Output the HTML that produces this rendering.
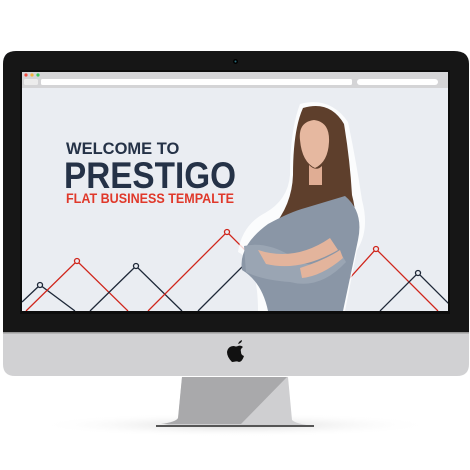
<!DOCTYPE html>
<html><head><style>
html,body{margin:0;padding:0;background:#fff;width:470px;height:470px;overflow:hidden}
svg{display:block}
text{font-family:"Liberation Sans",sans-serif;font-weight:bold}
</style></head><body>
<svg width="470" height="470" viewBox="0 0 470 470">
<defs>
<radialGradient id="sh" cx="0.5" cy="0.5" r="0.5"><stop offset="0" stop-color="#d8d8d8"/><stop offset="1" stop-color="#fff" stop-opacity="0"/></radialGradient>
<clipPath id="scr"><rect x="22" y="88" width="426" height="223"/></clipPath>
</defs>
<ellipse cx="235" cy="425" rx="200" ry="12" fill="url(#sh)"/>
<path d="M182 377 L288 377 L292 420 Q296 424 314 426 L156 426 Q174 424 178 420 Z" fill="#cfcfd1"/>
<path d="M182 377 L287 377 L241 424 L161 424 Q176 422 178 418 Z" fill="#a9a9ab"/>
<rect x="156" y="425" width="158" height="2" fill="#555"/>
<path d="M3 64 Q3 51 16 51 L454 51 Q469 51 469 64 L469 364 Q469 376 457 376 L15 376 Q3 376 3 364 Z" fill="#d1d1d3"/>
<path d="M3 64 Q3 51 16 51 L454 51 Q469 51 469 64 L469 333 L3 333 Z" fill="#161616"/>
<rect x="3" y="332" width="466" height="1.5" fill="#999"/>
<circle cx="235.5" cy="61.5" r="2.5" fill="#000"/><circle cx="235.5" cy="61.5" r="1" fill="#2a6c7a"/>
<rect x="20" y="70" width="430" height="244" fill="#0c0c0c"/>
<rect x="22" y="72" width="426" height="16" fill="#d4d4d6"/>
<circle cx="26" cy="75" r="1.6" fill="#ef4b3f"/><circle cx="32" cy="75" r="1.6" fill="#f2b33b"/><circle cx="38" cy="75" r="1.6" fill="#3dc75a"/>
<rect x="24" y="79" width="14" height="6" rx="1.5" fill="#ececec"/>
<rect x="41" y="79" width="311" height="6" rx="1.5" fill="#fff"/>
<rect x="357" y="79" width="81" height="6" rx="3" fill="#fff"/>
<rect x="22" y="88" width="426" height="223" fill="#eaedf2"/>
<g clip-path="url(#scr)" fill="none" stroke-width="1.3">
<path d="M22 302 L40 285 L75 311" stroke="#1e2838"/>
<path d="M26 311 L77 261 L128 311" stroke="#d0261c"/>
<path d="M90 311 L136 266 L182 311" stroke="#1e2838"/>
<path d="M148 311 L227 232 L306 311" stroke="#d0261c"/>
<path d="M198 311 L258 251" stroke="#1e2838"/>
<path d="M320 311 L376 249 L438 311" stroke="#d0261c"/>
<path d="M380 311 L418 273 L456 311" stroke="#1e2838"/>
<g fill="#eaedf2"><circle cx="40" cy="285" r="2.5" stroke="#1e2838"/><circle cx="77" cy="261" r="2.5" stroke="#d0261c"/><circle cx="136" cy="266" r="2.5" stroke="#1e2838"/><circle cx="227" cy="232" r="2.5" stroke="#d0261c"/><circle cx="376" cy="249" r="2.5" stroke="#d0261c"/><circle cx="418" cy="273" r="2.5" stroke="#1e2838"/></g>
<g stroke="none">
<path d="M300 104 Q330 96 348 122 Q356 160 362 200 Q370 230 357 250 L345 311 L258 311 Q258 262 238 252 Q242 225 265 213 Q288 200 290 175 Q290 130 300 104Z" fill="#fff" opacity="0.8"/>
<path d="M303 108 Q330 100 344 124 Q350 160 352 195 Q360 225 348 245 L290 235 L272 228 Q292 205 293 175 Q293 130 303 108Z" fill="#5e3f2c"/>
<path d="M300 140 Q298 122 314 120 Q330 122 329 142 Q328 162 315 168 Q302 162 300 140Z" fill="#e6b8a0"/>
<path d="M309 165 Q316 172 322 166 L322 185 L309 185Z" fill="#e0ad94"/>
<path d="M268 224 Q290 212 305 208 L345 196 Q364 212 358 240 L343 311 L268 311 Q262 282 242 270 Q238 246 268 224Z" fill="#8a96a6"/>
<path d="M244 246 Q270 240 300 262 Q320 270 340 252 L346 262 Q320 290 290 282 Q262 280 246 272Z" fill="#9aa5b3"/>
<path d="M258 250 Q295 262 330 238 L338 250 Q300 272 266 264 Z" fill="#e3b49c"/>
<path d="M300 268 Q325 260 340 250 L343 258 Q322 276 302 278Z" fill="#e3b49c"/>
</g>
</g>
<text x="66" y="154" font-size="16.5" fill="#253247">WELCOME TO</text>
<text x="64" y="188" font-size="37" fill="#253247" textLength="172" lengthAdjust="spacingAndGlyphs">PRESTIGO</text>
<text x="66" y="203" font-size="13.5" fill="#e0382a" textLength="168" lengthAdjust="spacingAndGlyphs">FLAT BUSINESS TEMPALTE</text>
<path d="M238 344 Q239 341 242 340 Q242 343 238 344Z M234 346 Q236 347 238 346 Q241 345 243 347 Q240 349 241 352 Q241 355 244 356 Q242 362 239 362 Q237 361 235.5 361.5 Q233 362 232 362 Q227 357 227 352 Q228 346 234 346Z" fill="#111"/>
</svg>
</body></html>
